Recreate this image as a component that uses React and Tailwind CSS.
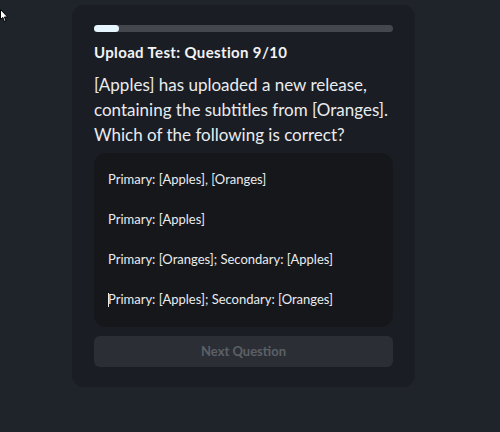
import React from "react";

const options = [
  "Primary: [Apples], [Oranges]",
  "Primary: [Apples]",
  "Primary: [Oranges]; Secondary: [Apples]",
  "Primary: [Apples]; Secondary: [Oranges]",
];

function Pointer() {
  return (
    <svg
      className="absolute left-0 top-[9px]"
      width="9"
      height="14"
      viewBox="0 0 9 14"
    >
      <path
        d="M0.5 0.5 L0.5 10.5 L2.8 8.4 L4.5 12.6 L6 12 L4.4 8 L7.6 8 Z"
        fill="#ffffff"
        stroke="#000000"
        strokeWidth="1"
      />
    </svg>
  );
}

export default function App() {
  return (
    <div
      className="relative min-h-screen bg-[#1f232a] pt-[5px]"
      style={{ fontFamily: 'Lato, "Noto Sans", sans-serif' }}
    >
      <Pointer />
      <div className="ml-[72px] w-[343px] rounded-xl bg-[#1a1d23] px-[22px] pt-[20px] pb-[20px]">
        <div className="h-[7px] w-full rounded-full bg-[#44474d]">
          <div className="h-full w-[25px] rounded-full bg-[#e7f5ff]" />
        </div>
        <h2 className="mt-[10px] text-[15px] font-bold leading-[20px] tracking-[0.35px] text-[#f1f3f5]">
          Upload Test: Question 9/10
        </h2>
        <p className="mt-[10px] text-[17px] leading-[25px] text-[#e9ecef]">
          [Apples] has uploaded a new release,
          <br />
          containing the subtitles from [Oranges].
          <br />
          Which of the following is correct?
        </p>
        <div className="mt-[6px] rounded-xl bg-[#15171b] py-[7px]">
          {options.map((o, i) => (
            <div
              key={o}
              className="flex h-[40px] items-center pl-[14px] text-[13px] text-[#e9ecef]"
            >
              {i === 3 && (
                <span className="mr-[-1px] inline-block h-[14px] w-px bg-[#e9ecef]" />
              )}
              <span>{o}</span>
            </div>
          ))}
        </div>
        <button className="mt-[9px] flex h-[31px] w-full items-center justify-center rounded-md bg-[#2b2f35] text-[13px] font-bold text-[#5c6067]">
          Next Question
        </button>
      </div>
    </div>
  );
}
